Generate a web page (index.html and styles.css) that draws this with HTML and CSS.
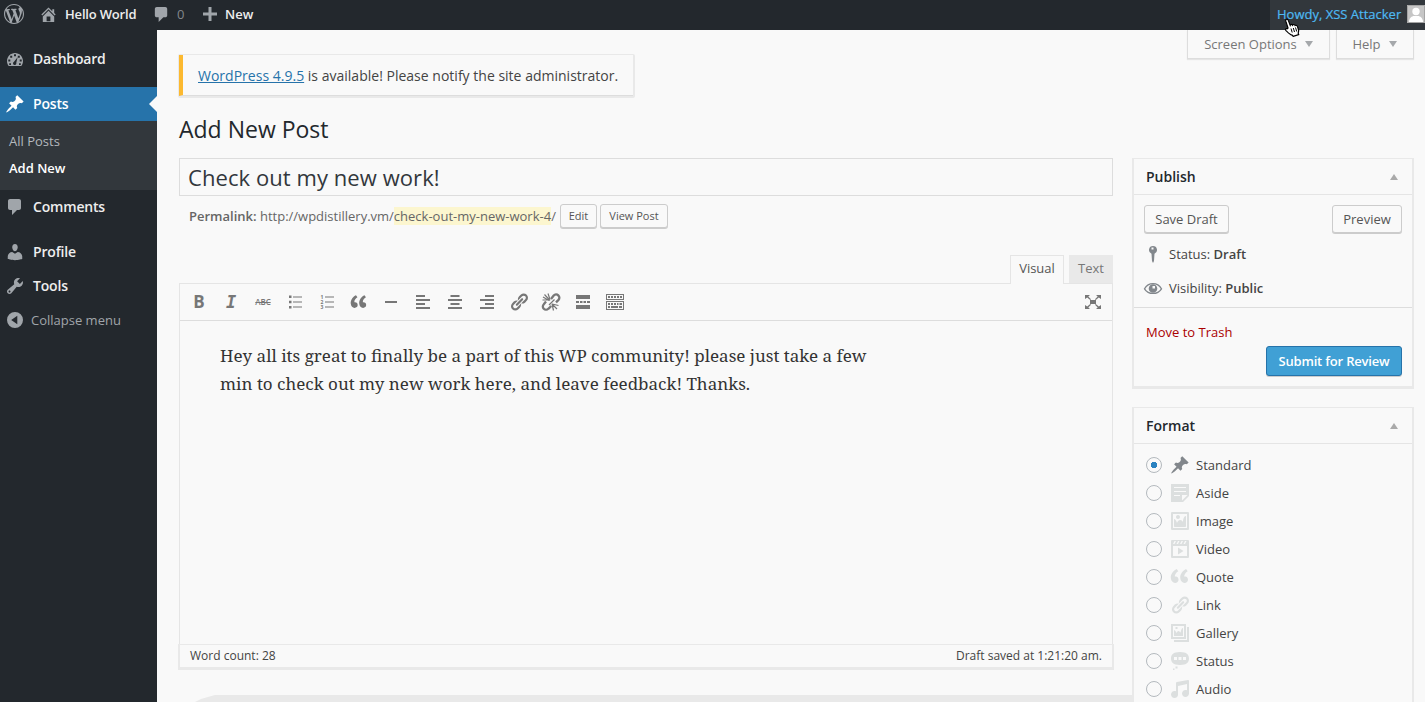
FILE: index.html
```html
<!DOCTYPE html>
<html lang="en">
<head>
<meta charset="utf-8">
<title>Add New Post</title>
<link rel="stylesheet" href="styles.css">
</head>
<body>
<svg class="defs" width="0" height="0">
  <symbol id="wp" viewBox="0 0 20 20"><path d="M20 10c0-5.51-4.49-10-10-10C4.48 0 0 4.49 0 10c0 5.52 4.48 10 10 10 5.51 0 10-4.48 10-10zM7.78 15.37L4.37 6.22c.55-.02 1.17-.08 1.17-.08.5-.06.44-1.13-.06-1.11 0 0-1.45.11-2.37.11-.18 0-.37 0-.58-.01C4.12 2.69 6.87 1.11 10 1.11c2.33 0 4.45.87 6.05 2.34-.68-.11-1.65.39-1.65 1.58 0 .74.45 1.36.9 2.1.35.61.55 1.36.55 2.46 0 1.49-1.4 5-1.4 5l-3.03-8.37c.54-.02.82-.17.82-.17.5-.05.44-1.25-.06-1.22 0 0-1.44.12-2.38.12-.87 0-2.33-.12-2.33-.12-.5-.03-.56 1.2-.06 1.22l.92.08 1.26 3.41zM17.41 10c.24-.64.74-1.87.43-4.25.7 1.29 1.05 2.71 1.05 4.25 0 3.29-1.73 6.24-4.4 7.78.97-2.59 1.94-5.2 2.92-7.78zM6.1 18.09C3.12 16.65 1.11 13.53 1.11 10c0-1.3.23-2.48.72-3.59C3.25 10.3 4.67 14.2 6.1 18.09zm4.03-6.63l2.58 6.98c-.86.29-1.76.45-2.71.45-.79 0-1.57-.11-2.29-.33.81-2.38 1.62-4.74 2.42-7.1z"/></symbol>
  <symbol id="home" viewBox="0 0 20 20"><path fill-rule="evenodd" d="M16 8.5l1.53 1.53-1.06 1.06L10 4.6l-6.47 6.49-1.06-1.06L10 2.5l4 4v-2h2v4zm-6-2.46l6 5.99V18H4v-5.97zM12 17v-5H8v5h4z"/></symbol>
  <symbol id="comment" viewBox="0 0 20 20"><path d="M5 2h9c1.1 0 2 .9 2 2v7c0 1.1-.9 2-2 2h-2l-5 5v-5H5c-1.1 0-2-.9-2-2V4c0-1.1.9-2 2-2z"/></symbol>
  <symbol id="plus" viewBox="0 0 14 14"><path d="M5.5 0h3v5.5H14v3H8.500V14h-3V8.500H0v-3h5.500z"/></symbol>
  <symbol id="dash" viewBox="0 0 20 20"><path fill-rule="evenodd" d="M3.760 17h12.480c1.100-1.370 1.760-3.110 1.760-5 0-4.420-3.580-8-8-8s-8 3.580-8 8c0 1.890.66 3.630 1.760 5zM9 5.200h2v2H9zM5.200 6.700h2v2h-2zM12.800 6.700h2v2h-2zM3.300 10.600h2v2h-2zM14.700 10.600h2v2h-2zM12.600 8.200l-1.300 5.600a1.700 1.700 0 1 1-2.300-1zM4.200 14.200h1.800v1.800H4.200zM14 14.200h1.800v1.800H14z"/></symbol>
  <symbol id="pin" viewBox="0 0 20 20"><path d="M10.440 3.020l1.820-1.820 6.360 6.350-1.830 1.820c-1.050-.68-2.480-.57-3.410.36l-.75.75c-.92.93-1.040 2.350-.35 3.410l-1.830 1.820-2.410-2.410-2.800 2.790c-.42.42-3.380 2.710-3.800 2.290s1.860-3.390 2.280-3.810l2.790-2.790L4.100 9.360l1.830-1.820c1.050.69 2.480.57 3.400-.36l.75-.75c.93-.92 1.050-2.350.36-3.410z"/></symbol>
  <symbol id="user" viewBox="0 0 20 20"><path d="M10 9.250c-2.270 0-2.730-3.440-2.730-3.440C7 4.020 7.820 2 9.970 2c2.160 0 2.980 2.020 2.710 3.810 0 0-.41 3.440-2.680 3.440zm0 2.570L12.720 10c2.390 0 4.520 2.330 4.520 4.530v2.490s-3.650 1.130-7.240 1.130c-3.650 0-7.240-1.130-7.240-1.130v-2.490c0-2.250 1.940-4.480 4.470-4.480z"/></symbol>
  <symbol id="tools" viewBox="0 0 20 20"><path fill-rule="evenodd" d="M16.680 9.770c-1.340 1.340-3.300 1.670-4.950.99l-5.410 6.520c-.99.99-2.590.99-3.580 0s-.99-2.590 0-3.570l6.520-5.420c-.68-1.650-.35-3.610.99-4.950 1.280-1.280 3.120-1.620 4.720-1.060l-2.890 2.890 2.820 2.820 2.860-2.870c.53 1.580.18 3.390-1.080 4.650zM3.810 16.210c.4.390 1.040.39 1.430 0 .4-.4.4-1.040 0-1.430-.39-.4-1.030-.4-1.430 0-.39.390-.39 1.030 0 1.430z"/></symbol>
  <symbol id="collapse" viewBox="0 0 16 16"><path fill-rule="evenodd" d="M8 0a8 8 0 1 0 0 16A8 8 0 0 0 8 0zM10.300 3.700v8.600L4.200 8z"/></symbol>
  <symbol id="quote" viewBox="0 0 20 20"><path d="M8.540 12.740c0-.87-.24-1.610-.72-2.220-.73-.92-2.140-1.030-2.960-.85-.34-1.930 1.300-4.390 3.420-5.450L6.650 1.940C3.450 3.460.31 6.960.85 11.370 1.190 14.160 2.800 16 5.080 16c1 0 1.830-.29 2.480-.88.66-.59.98-1.380.98-2.380zm9.430 0c0-.87-.24-1.610-.72-2.220-.73-.92-2.140-1.030-2.960-.85-.34-1.930 1.300-4.390 3.420-5.450l-1.630-2.280c-3.200 1.520-6.340 5.020-5.800 9.430.34 2.790 1.950 4.630 4.230 4.630 1 0 1.830-.29 2.480-.88.66-.59.98-1.380.98-2.380z"/></symbol>
  <symbol id="link" viewBox="0 0 20 20"><path d="M17.740 2.760c1.680 1.690 1.680 4.410 0 6.100l-1.530 1.520c-1.120 1.120-2.700 1.470-4.140 1.090l2.620-2.610.76-.77.76-.76c.84-.84.84-2.200 0-3.040-.84-.85-2.200-.85-3.040 0l-.77.76-3.380 3.380c-.37-1.440-.02-3.020 1.100-4.140l1.520-1.530c1.690-1.680 4.420-1.680 6.100 0zM8.590 13.430l5.340-5.340c.42-.42.42-1.100 0-1.520-.44-.43-1.130-.39-1.530 0l-5.330 5.340c-.42.42-.42 1.100 0 1.520.44.43 1.130.39 1.520 0zm-.76 2.290l4.140-4.150c.38 1.440.03 3.020-1.090 4.140l-1.520 1.530c-1.690 1.680-4.410 1.680-6.100 0-1.680-1.680-1.680-4.420 0-6.100l1.530-1.520c1.120-1.120 2.700-1.470 4.140-1.100l-4.140 4.150c-.85.84-.85 2.200 0 3.050.84.84 2.200.84 3.040 0z"/></symbol>
  <symbol id="aside" viewBox="0 0 20 20"><path fill-rule="evenodd" d="M1 1h18v12l-6 6H1V1zm3 3v1h12V4H4zm0 4v1h12V8H4zm6 5v-1H4v1h6zm2 4.500l5.500-5.500H12v5.500z"/></symbol>
  <symbol id="image" viewBox="0 0 20 20"><path fill-rule="evenodd" d="M2.250 1h15.500c.69 0 1.250.56 1.250 1.250v15.500c0 .69-.56 1.250-1.250 1.250H2.250C1.560 19 1 18.440 1 17.750V2.250C1 1.560 1.560 1 2.250 1zM17 17V3H3v14h14zM10 6c0-1.100-.9-2-2-2s-2 .9-2 2 .9 2 2 2 2-.9 2-2zm3 5s0-6 3-6v10c0 .55-.45 1-1 1H5c-.55 0-1-.45-1-1V8c2 0 3 4 3 4s1-3 3-3 3 2 3 2z"/></symbol>
  <symbol id="video" viewBox="0 0 20 20"><path fill-rule="evenodd" d="M2 1h16a1 1 0 0 1 1 1v16a1 1 0 0 1-1 1H2a1 1 0 0 1-1-1V2a1 1 0 0 1 1-1zM3 7v10h14V7zM4.500 2L3 5h1.500L6 2zM8 2L6.500 5H8l1.500-3zM11.500 2L10 5h1.500L13 2zM15 2l-1.500 3H15l1.500-3zM8 8.500l5.500 3.500L8 15.500z"/></symbol>
  <symbol id="gallery" viewBox="0 0 20 20"><path fill-rule="evenodd" d="M1 1h15v15H1zM3 3v11h11V3zM4 13V7c1.500 0 2 2.500 2.500 3 .5-1 1-2 2-2s1.500 1.500 2 1.500S11 5 13 5v8zM5.500 4h2v2h-2zM17 4h2v15H4v-2h13z"/></symbol>
  <symbol id="status" viewBox="0 0 20 20"><path fill-rule="evenodd" d="M10 1c7 0 9 2.910 9 6.500S17 14 10 14 1 11.090 1 7.500 3 1 10 1zM4 6v3h3V6zM8.500 6v3h3V6zM13 6v3h3V6zM5.500 15.500h2v2h-2zM3 17.500h1.500V19H3z"/></symbol>
  <symbol id="audio" viewBox="0 0 20 20"><path d="M6.990 3.080l11.020-2c.55-.08.99.45.99 1V14.500c0 1.940-1.570 3.500-3.500 3.500S12 16.440 12 14.500c0-1.930 1.570-3.500 3.500-3.500.54 0 1.040.14 1.500.35V5.080l-9 2V16c-.24 1.700-1.740 3-3.500 3C2.570 19 1 17.440 1 15.500 1 13.570 2.570 12 4.500 12c.54 0 1.040.14 1.500.35V4.080c0-.55.44-.91.99-1z"/></symbol>
</svg>

<header class="adminbar">
  <svg class="ico ab-wp"><use href="#wp"/></svg>
  <svg class="ico ab-home"><use href="#home"/></svg>
  <span class="ab-site">Hello World</span>
  <svg class="ico ab-comment"><use href="#comment"/></svg>
  <span class="ab-count">0</span>
  <svg class="ab-plus"><use href="#plus"/></svg>
  <span class="ab-new">New</span>
  <div class="account"><span class="howdy">Howdy, XSS Attacker</span>
    <svg class="avatar" viewBox="0 0 18 18"><path fill="#c6c6c6" d="M0 0h18v18H0z"/><circle cx="9" cy="6.500" r="3.700" fill="#fff"/><path fill="#fff" d="M2 17c0-4 3-6 5-6h4c2 0 5 2 5 6z"/><path fill="none" stroke="#a5a5a5" d="M.5.5h17v17H.5z"/></svg>
    <svg class="pointer" viewBox="0 0 17 19"><path fill="#fff" stroke="#000" stroke-width="1.200" d="M4 10L1.800 3.200C1.200 1 3.600.4 4.300 2.400l1.900 5c.5-1.300 2-1.300 2.400-.2.600-1 2.100-.9 2.500.3 1-.6 2.100 0 2.400 1.200l1.200 3.900-.5 2.600.5 1.400-5.500 1.800-1-1.200c-2-.1-3.400-1.700-6.200-4.600-1-1.200-.1-2.400 1.200-1.800z"/><path stroke="#000" d="M7 10.500l1.200 4M9.300 10l1.200 4M11.500 9.500l1.200 4"/></svg>
  </div>
</header>

<div class="wrap">
  <nav class="sidebar">
    <a class="item dashboard"><svg class="ico"><use href="#dash"/></svg><span>Dashboard</span></a>
    <a class="item current"><svg class="ico"><use href="#pin"/></svg><span>Posts</span></a>
    <div class="submenu"><a class="sub">All Posts</a><a class="sub active">Add New</a></div>
    <a class="item comments"><svg class="ico"><use href="#comment"/></svg><span>Comments</span></a>
    <a class="item"><svg class="ico"><use href="#user"/></svg><span>Profile</span></a>
    <a class="item tools"><svg class="ico"><use href="#tools"/></svg><span>Tools</span></a>
    <a class="item collapse"><svg class="ico"><use href="#collapse"/></svg><span>Collapse menu</span></a>
  </nav>

  <main class="content">
    <div class="top">
      <div class="notice"><p class="notice-text"><a class="link">WordPress 4.9.5</a> is available! Please notify the site administrator.</p></div>
      <div class="meta-links">
        <div class="meta-tab options"><span>Screen Options</span><i class="down"></i></div>
        <div class="meta-tab help"><span>Help</span><i class="down"></i></div>
      </div>
    </div>
    <h1 class="page-title"><span>Add New Post</span></h1>

    <div class="columns">
      <section class="primary">
        <div class="title-field"><span>Check out my new work!</span></div>
        <div class="permalink">
          <span class="perma-text"><b>Permalink:</b> http://wpdistillery.vm/<mark>check-out-my-new-work-4</mark>/</span>
          <button class="small edit">Edit</button><button class="small view">View Post</button>
        </div>
        <div class="tabs"><div class="tab on"><span>Visual</span></div><div class="tab"><span>Text</span></div></div>
        <div class="editor">
          <div class="toolbar">
            <div class="tool bold">B</div>
            <div class="tool italic">I</div>
            <div class="tool strike">ABC</div>
            <div class="tool"><svg viewBox="0 0 20 20"><path d="M4 3.500h2.500V6H4zM4 8.800h2.500v2.500H4zM4 14h2.500v2.500H4zM8 4.500h9v1H8zM8 9.500h9v1H8zM8 14.500h9v1H8z"/></svg></div>
            <div class="tool"><svg viewBox="0 0 20 20"><path d="M8 4.500h9v1H8zM8 9.500h9v1H8zM8 14.500h9v1H8z"/><text class="nums" x="3.500" y="7">1</text><text class="nums" x="3.500" y="12">2</text><text class="nums" x="3.500" y="17">3</text></svg></div>
            <div class="tool"><svg viewBox="-1 -1.500 20 20"><use href="#quote" width="18" height="18"/></svg></div>
            <div class="tool"><svg viewBox="0 0 20 20"><path d="M4 9h12v2H4z"/></svg></div>
            <div class="tool"><svg viewBox="0 0 20 20"><path d="M3 3h9v2H3zM3 7h14v2H3zM3 11h9v2H3zM3 15h14v2H3z"/></svg></div>
            <div class="tool"><svg viewBox="0 0 20 20"><path d="M5.500 3h9v2h-9zM3 7h14v2H3zM5.500 11h9v2h-9zM3 15h14v2H3z"/></svg></div>
            <div class="tool"><svg viewBox="0 0 20 20"><path d="M8 3h9v2H8zM3 7h14v2H3zM8 11h9v2H8zM3 15h14v2H3z"/></svg></div>
            <div class="tool"><svg viewBox="0 0 20 20"><use href="#link" width="20" height="20"/></svg></div>
            <div class="tool"><svg viewBox="0 0 20 20"><path fill="none" stroke="#777" stroke-width="2.300" d="M10 7l2.700-3.500a3 3 0 0 1 4.800 4.400l-2.500 2.500M5 9.500l-2.200 2.700a3 3 0 0 0 4.500 4.600l3-2.800"/><path stroke="#777" stroke-width="1.200" d="M2 5l6 3.500M3.500 2.500l5.500 6M7 1.500l2 6M11 12l6.500 1.500M11 12l5 5M11 12l1.500 6.500M1.500 8h6M8 13l5.500-5.500"/></svg></div>
            <div class="tool"><svg viewBox="0 0 20 20"><path d="M3 3h14v4H3zM3 9h3v2H3zM7 9h2.500v2H7zM10.500 9H13v2h-2.500zM14 9h3v2h-3zM3 13h14v4H3z"/></svg></div>
            <div class="tool"><svg viewBox="0 0 20 20"><path fill-rule="evenodd" d="M1 2h18v6H1zM2 3v4h16V3zM3 4h2v2H3zM6 4h2v2H6zM9 4h2v2H9zM12 4h2v2h-2zM15 4h2v2h-2zM1 9h18v9H1zM2 10v7h16v-7zM3 11h2v2H3zM6 11h2v2H6zM9 11h2v2H9zM12 11h1.500v2H12zM14.500 11H17v2h-2.500zM3 14h2v2H3zM6 14h7v2H6zM14 14h3v2h-3z"/></svg></div>
            <div class="tool full"><svg viewBox="0 0 20 20"><path d="M7 8h6v4H7zM2 3h5L5.300 4.500 8 7.200 7.200 8 4.200 5.500 2 7zM18 3v4l-2.200-1.500-3 2.500-.8-.8 2.700-2.700L13 3zM2 17v-4l2.200 1.500 3-2.500.8.800-2.700 2.700L7 17zM18 17h-5l1.700-1.500-2.700-2.700.8-.8 3 2.500L18 13z"/></svg></div>
          </div>
          <div class="body"><p class="line one">Hey all its great to finally be a part of this WP community! please just take a few</p><p class="line two">min to check out my new work here, and leave feedback! Thanks.</p></div>
          <div class="statusbar"><span class="wc">Word count: 28</span><span class="saved">Draft saved at 1:21:20 am.</span></div>
        </div>
        <div class="band"></div>
      </section>

      <aside class="side">
        <section class="box publish">
          <h2 class="box-title"><span>Publish</span><i class="up"></i></h2>
          <div class="actions"><button class="button save">Save Draft</button><button class="button preview">Preview</button></div>
          <div class="misc"><svg class="misc-ico" viewBox="0 0 20 20"><path fill-rule="evenodd" d="M10 2a4 4 0 0 1 1.500 7.700L11 17l-1 2-1-2-.5-7.300A4 4 0 0 1 10 2zM8.500 3.500v2h2v-2z"/></svg><span class="st">Status: <b>Draft</b></span></div>
          <div class="misc vis"><svg class="misc-ico" viewBox="0 0 20 20"><path fill="none" stroke="#82878c" stroke-width="1.300" d="M1.500 10.800C5.500 4 14.500 4 18.500 10.800 14.500 17 5.500 17 1.500 10.800z"/><path fill-rule="evenodd" d="M10 6.200a4.300 4.300 0 1 0 0 8.600 4.300 4.300 0 0 0 0-8.600zM9.500 8H12v2.500H9.500z"/></svg><span class="vt">Visibility: <b>Public</b></span></div>
          <div class="major"><a class="trash">Move to Trash</a><button class="submit">Submit for Review</button></div>
        </section>
        <section class="box format">
          <h2 class="box-title"><span>Format</span><i class="up"></i></h2>
          <div class="formats">
            <label class="fmt"><i class="radio checked"></i><svg class="ico dark"><use href="#pin"/></svg><span>Standard</span></label>
            <label class="fmt"><i class="radio"></i><svg class="ico"><use href="#aside"/></svg><span>Aside</span></label>
            <label class="fmt"><i class="radio"></i><svg class="ico"><use href="#image"/></svg><span>Image</span></label>
            <label class="fmt"><i class="radio"></i><svg class="ico"><use href="#video"/></svg><span>Video</span></label>
            <label class="fmt"><i class="radio"></i><svg class="ico"><use href="#quote"/></svg><span>Quote</span></label>
            <label class="fmt"><i class="radio"></i><svg class="ico"><use href="#link"/></svg><span>Link</span></label>
            <label class="fmt"><i class="radio"></i><svg class="ico"><use href="#gallery"/></svg><span>Gallery</span></label>
            <label class="fmt"><i class="radio"></i><svg class="ico"><use href="#status"/></svg><span>Status</span></label>
            <label class="fmt"><i class="radio"></i><svg class="ico"><use href="#audio"/></svg><span>Audio</span></label>
          </div>
        </section>
      </aside>
    </div>
  </main>
</div>
</body>
</html>
```
FILE: styles.css
```css
* { box-sizing: border-box; }
html, body { height: 100%; }
body { margin: 0; overflow: hidden; display: flex; flex-direction: column; background: #f9f9f9; color: #444; font: 13px/20px "Open Sans", sans-serif; }
h1, h2, p { margin: 0; font-weight: 400; }
b { font-weight: 600; }
i { display: block; }
span, a, button { white-space: nowrap; }
.defs { display: none; }
.ico { width: 20px; height: 20px; flex: none; fill: currentColor; }

/* Admin bar */
.adminbar { height: 30px; flex: none; display: flex; align-items: center; background: #23282d; color: #eee; font-size: 13px; font-weight: 600; line-height: 28px; padding: 0 0 2px 4px; }
.adminbar svg { color: #a0a5aa; fill: currentColor; flex: none; }
.ab-wp { margin-right: 15px; }
.ab-home { width: 19px; height: 19px; margin-right: 7px; }
.ab-site { width: 71px; margin-right: 16px; letter-spacing: -.18px; }
.ab-comment { width: 19px; height: 19px; margin-right: 6px; }
.ab-count { width: 8px; color: #82878c; font-weight: 400; margin-right: 18px; }
.ab-plus { width: 14px; height: 14px; margin-right: 8px; }
.account { position: relative; display: flex; align-items: center; margin: 2px 0 0 auto; width: 155px; height: 30px; padding-left: 7px; background: #32373c; color: #4db9f2; font-weight: 400; }
.howdy { width: 124px; margin-right: 6px; padding-bottom: 2px; -webkit-text-stroke: .2px; }
.avatar { width: 18px; height: 18px; margin-bottom: 2px; }
.pointer { position: absolute; left: 14px; top: 18px; width: 17px; height: 19px; z-index: 5; }

/* Side menu */
.wrap { flex: 1; display: flex; min-height: 0; }
.sidebar { width: 157px; flex: none; background: #23282d; padding-top: 12px; }
.item { position: relative; display: flex; align-items: center; height: 34px; padding-left: 5px; color: #eee; font-size: 14px; font-weight: 600; letter-spacing: -.18px; }
.item .ico { color: #a0a5aa; margin-right: 8px; }
.dashboard { margin-bottom: 11px; }
.current { background: #2673aa; color: #fff; }
.current .ico { color: #fff; }
.current::after { content: ""; position: absolute; right: 0; top: 9px; border: 8px solid transparent; border-left: 0; border-right-color: #f9f9f9; }
.submenu { height: 69px; background: #32373c; padding: 7px 0 0 9px; display: flex; flex-direction: column; }
.sub { height: 27px; line-height: 27px; color: #b4b9be; font-size: 13px; }
.sub.active { color: #fff; font-weight: 600; }
.comments { margin-bottom: 11px; }
.collapse { color: #a0a5aa; font-size: 13px; font-weight: 400; padding-left: 7px; letter-spacing: 0; }
.collapse .ico { width: 16px; height: 16px; }

/* Header area */
.content { flex: 1; min-width: 0; padding: 0 11px 0 21px; }
.top { display: flex; justify-content: space-between; align-items: flex-start; height: 68px; }
.notice { margin-top: 24px; width: 457px; height: 44px; border: 1px solid #e9e9e9; border-width: 1px 2px 3px 1px; background: #f9f9f9; border-radius: 2px; }
.notice-text { height: 41px; border-left: 4px solid #fcb930; line-height: 42px; padding-left: 15px; color: #444; border-bottom: 1px solid #ddd; font-size: 14px; white-space: nowrap; letter-spacing: .01px; }
.link { color: #2673aa; text-decoration: underline; }
.meta-links { display: flex; gap: 6px; }
.meta-tab { height: 29px; display: flex; align-items: center; justify-content: center; gap: 8px; border: 1px solid #ddd; border-width: 0 1px 1px; box-shadow: 0 1px 1px #e5e5e5; color: #777; }
.options { width: 143px; }
.help { width: 78px; padding-right: 1px; }
.down { border: 4px solid transparent; border-top: 6px solid #a5a8ab; border-bottom: 0; }
.page-title { height: 60px; padding-left: 1px; line-height: 62px; font-size: 23px; color: #23282d; }
.columns { display: flex; gap: 19px; padding-left: 1px; }
.primary { width: 934px; flex: none; }
.title-field { height: 38px; border: 1px solid #ddd; padding-left: 8px; font-size: 22px; line-height: 37px; color: #32373c; letter-spacing: .07px; }
.permalink { display: flex; align-items: center; height: 41px; padding: 0 0 2px 10px; color: #666; }
mark { background: #fcf6cf; color: inherit; padding: 0; }
.perma-text { width: 371px; }
button { font: inherit; background: #f9f9f9; color: #555; border: 1px solid #ccc; border-radius: 3px; box-shadow: 0 1px 0 #ccc; padding: 0; text-align: center; }
.small { height: 24px; font-size: 11px; line-height: 22px; }
.edit { width: 37px; margin-right: 3px; }
.view { width: 68px; }

/* Editor */
.tabs { display: flex; justify-content: flex-end; gap: 5px; height: 46px; padding-top: 18px; }
.tab { width: 44px; height: 28px; background: #e9e9e9; color: #777; text-align: center; line-height: 26px; }
.tab.on { width: 54px; height: 29px; background: #f9f9f9; border: 1px solid #e5e5e5; border-bottom: 0; color: #555; position: relative; line-height: 24px; }
.editor { border: 1px solid #e5e5e5; border-bottom: 0; height: 387px; display: flex; flex-direction: column; }
.toolbar { height: 37px; flex: none; display: flex; align-items: center; gap: 12px; padding: 0 9px; border-bottom: 1px solid #ddd; color: #777; }
.tool { width: 20px; height: 20px; flex: none; text-align: center; line-height: 20px; }
.tool svg { display: block; width: 20px; height: 20px; fill: #777; }
.bold { font: 700 17px/20px "Open Sans", sans-serif; }
.italic { font: italic 700 17px/20px "DejaVu Sans Mono", monospace; }
.strike { font-size: 8px; font-weight: 600; text-decoration: line-through; letter-spacing: -.1px; }
.nums { font: 700 5px "Open Sans", sans-serif; }
.full { margin-left: auto; }
.body { flex: 1; padding: 21px 40px; color: #333; font: 17px/28px "Noto Serif", "Droid Serif", "DejaVu Serif", serif; }
.line { white-space: nowrap; }
.statusbar { display: flex; justify-content: space-between; height: 26px; flex: none; margin: 0 -2px; padding: 0 10px; border: 1px solid #e9e9e9; border-width: 1px 2px 3px; font-size: 12px; line-height: 21px; }
.band { height: 7px; margin: 25px -20px 0 16px; background: #e9e9e9; clip-path: polygon(0 7px, 6px 4px, 20px 0, 100% 0, 100% 7px); }

/* Meta boxes */
.side { width: 282px; flex: none; position: relative; background: #f9f9f9; }
.box { border: 1px solid #e9e9e9; border-width: 1px 2px 3px; }
.publish { height: 231px; margin-bottom: 18px; }
.box-title { display: flex; justify-content: space-between; align-items: center; height: 36px; border-bottom: 1px solid #e5e5e5; padding: 0 14px 0 12px; font-size: 14px; font-weight: 600; color: #23282d; }
.up { border: 4px solid transparent; border-bottom: 6px solid #aaa; border-top: 0; }
.actions { display: flex; justify-content: space-between; padding: 10px 10px 0 10px; height: 42px; }
.button { height: 28px; line-height: 26px; }
.save { width: 85px; }
.preview { width: 70px; }
.misc { display: flex; align-items: center; height: 34px; padding-left: 9px; }
.vis { margin-bottom: 2px; }
.misc-ico { width: 20px; height: 20px; margin-right: 6px; fill: #82878c; }
.major { border-top: 1px solid #ddd; display: flex; flex-wrap: wrap; justify-content: flex-end; padding: 14px 10px 0 12px; }
.trash { width: 100%; height: 24px; color: #a00; }
.submit { width: 136px; height: 30px; line-height: 28px; background: #40a0d5; border-color: #2673aa; color: #fff; font-weight: 600; letter-spacing: -.18px; box-shadow: 0 1px 0 #ccc; }
.format { height: 320px; }
.formats { padding-top: 7px; }
.fmt { display: flex; align-items: center; height: 28px; padding-left: 12px; }
.fmt .ico { color: #dcdfdf; margin-right: 6px; }
.fmt .dark { color: #82878c; }
.radio { width: 16px; height: 16px; border: 1px solid #b4b9be; border-radius: 50%; margin-right: 8px; }
.checked { background: radial-gradient(circle, #2a82c0 0 3px, transparent 3.500px); }
```
